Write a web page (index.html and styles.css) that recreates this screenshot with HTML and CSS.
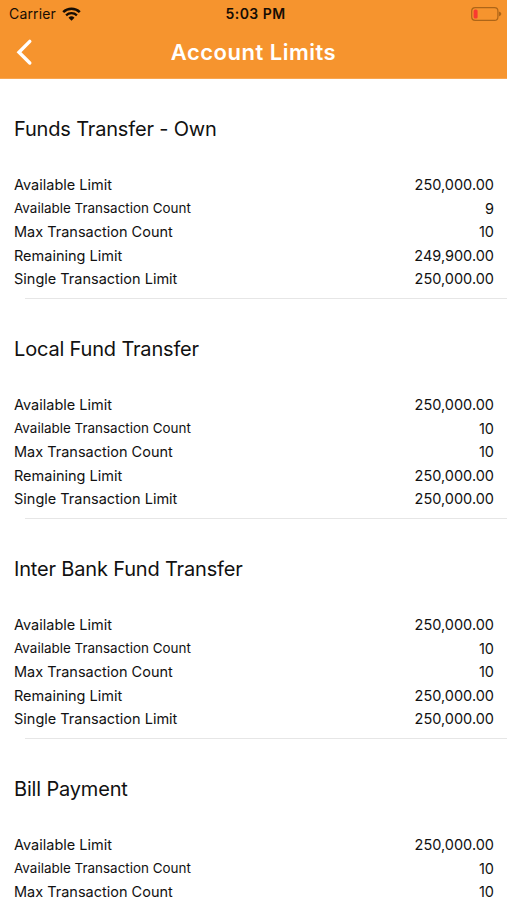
FILE: index.html
```
<!DOCTYPE html>
<html lang="en">
<head>
    <meta charset="UTF-8">
    <meta name="viewport" content="width=device-width, initial-scale=1.0">
    <title>Account Limits</title>
    <link rel="stylesheet" href="styles.css">
</head>
<body>
    <!-- Header -->
    <header class="header">
        <div class="status-bar">
            <div class="carrier">
                <span>Carrier</span>
                <svg width="19" height="14" viewBox="0 0 19 14">
                    <path d="M1.2 5.1 A11.8 11.8 0 0 1 17.8 5.1" fill="none" stroke="#160d04" stroke-width="2.5"/>
                    <path d="M4.1 8.3 A7.8 7.8 0 0 1 14.9 8.3" fill="none" stroke="#160d04" stroke-width="2.3"/>
                    <path d="M9.5 13.7 L6.5 10.7 A4.3 4.3 0 0 1 12.5 10.7 Z" fill="#160d04"/>
                </svg>
            </div>
            <span class="time">5:03 PM</span>
            <svg class="battery" width="31" height="14" viewBox="0 0 31 14">
                <rect x="0.7" y="0.7" width="26.2" height="12.6" rx="3.4" fill="none" stroke="#ad6518" stroke-width="1.2"/>
                <rect x="2.6" y="2.4" width="4" height="9.2" rx="1.5" fill="#f93a30"/>
                <path d="M27.9 4.6 Q30.4 5.6 30.4 7 Q30.4 8.4 27.9 9.4 Z" fill="#ad6518"/>
            </svg>
        </div>
        <div class="nav-bar">
            <svg class="back" width="18" height="28" viewBox="0 0 18 28">
                <path d="M14.8 3.4 L4 14.2 L14.8 25" fill="none" stroke="#fff" stroke-width="3.4" stroke-linecap="round"/>
            </svg>
            <h1>Account Limits</h1>
        </div>
    </header>

    <!-- Limits list -->
    <main class="limits">
        <section class="limit-group">
            <h2>Funds Transfer - Own</h2>
            <div class="rows">
                <div class="row"><span>Available Limit</span><span>250,000.00</span></div>
                <div class="row"><span class="small">Available Transaction Count</span><span>9</span></div>
                <div class="row"><span>Max Transaction Count</span><span>10</span></div>
                <div class="row"><span>Remaining Limit</span><span>249,900.00</span></div>
                <div class="row"><span>Single Transaction Limit</span><span>250,000.00</span></div>
            </div>
        </section>
        <section class="limit-group">
            <h2>Local Fund Transfer</h2>
            <div class="rows">
                <div class="row"><span>Available Limit</span><span>250,000.00</span></div>
                <div class="row"><span class="small">Available Transaction Count</span><span>10</span></div>
                <div class="row"><span>Max Transaction Count</span><span>10</span></div>
                <div class="row"><span>Remaining Limit</span><span>250,000.00</span></div>
                <div class="row"><span>Single Transaction Limit</span><span>250,000.00</span></div>
            </div>
        </section>
        <section class="limit-group">
            <h2>Inter Bank Fund Transfer</h2>
            <div class="rows">
                <div class="row"><span>Available Limit</span><span>250,000.00</span></div>
                <div class="row"><span class="small">Available Transaction Count</span><span>10</span></div>
                <div class="row"><span>Max Transaction Count</span><span>10</span></div>
                <div class="row"><span>Remaining Limit</span><span>250,000.00</span></div>
                <div class="row"><span>Single Transaction Limit</span><span>250,000.00</span></div>
            </div>
        </section>
        <section class="limit-group last">
            <h2>Bill Payment</h2>
            <div class="rows">
                <div class="row"><span>Available Limit</span><span>250,000.00</span></div>
                <div class="row"><span class="small">Available Transaction Count</span><span>10</span></div>
                <div class="row"><span>Max Transaction Count</span><span>10</span></div>
            </div>
        </section>
    </main>
</body>
</html>
```
FILE: styles.css
```
/* Global Styles */
* {
    box-sizing: border-box;
}

body {
    margin: 0;
    font-family: Inter, "Liberation Sans", sans-serif;
    background: #fff;
    color: #111;
}

/* Header */
.header {
    height: 79px;
    background: #f6942e;
    border-bottom: 1px solid #f8a651;
}

.status-bar {
    display: grid;
    grid-template-columns: 1fr auto 1fr;
    align-items: center;
    height: 27px;
    padding: 0 5px 0 9px;
    font-size: 14px;
    color: #160d04;
}

.carrier {
    display: flex;
    align-items: center;
    gap: 6px;
    letter-spacing: 0.15px;
}

.time {
    font-weight: 600;
    letter-spacing: 0.45px;
}

.battery {
    justify-self: end;
}

.nav-bar {
    display: grid;
    grid-template-columns: 40px 1fr 40px;
    align-items: center;
    height: 50px;
    padding: 0 15px;
}

h1 {
    margin: 0;
    color: #fff;
    font-size: 22px;
    font-weight: 600;
    letter-spacing: 0.5px;
    text-align: center;
    white-space: nowrap;
}

/* Limits */
.limit-group {
    height: 220px;
    padding: 37px 13px 0 14px;
    background: linear-gradient(#e6e6e6, #e6e6e6) 25px 219px / 100% 1px no-repeat;
}

.limit-group.last {
    height: 161px;
    background: none;
}

h2 {
    margin: 0 0 34px;
    font-size: 20px;
    font-weight: 400;
    line-height: 27px;
    letter-spacing: -0.17px;
}

.rows {
    display: flex;
    flex-direction: column;
    gap: 8px;
}

.row {
    display: flex;
    justify-content: space-between;
    font-size: 14.5px;
    line-height: 15.6px;
}

.small {
    font-size: 13.45px;
}
```
